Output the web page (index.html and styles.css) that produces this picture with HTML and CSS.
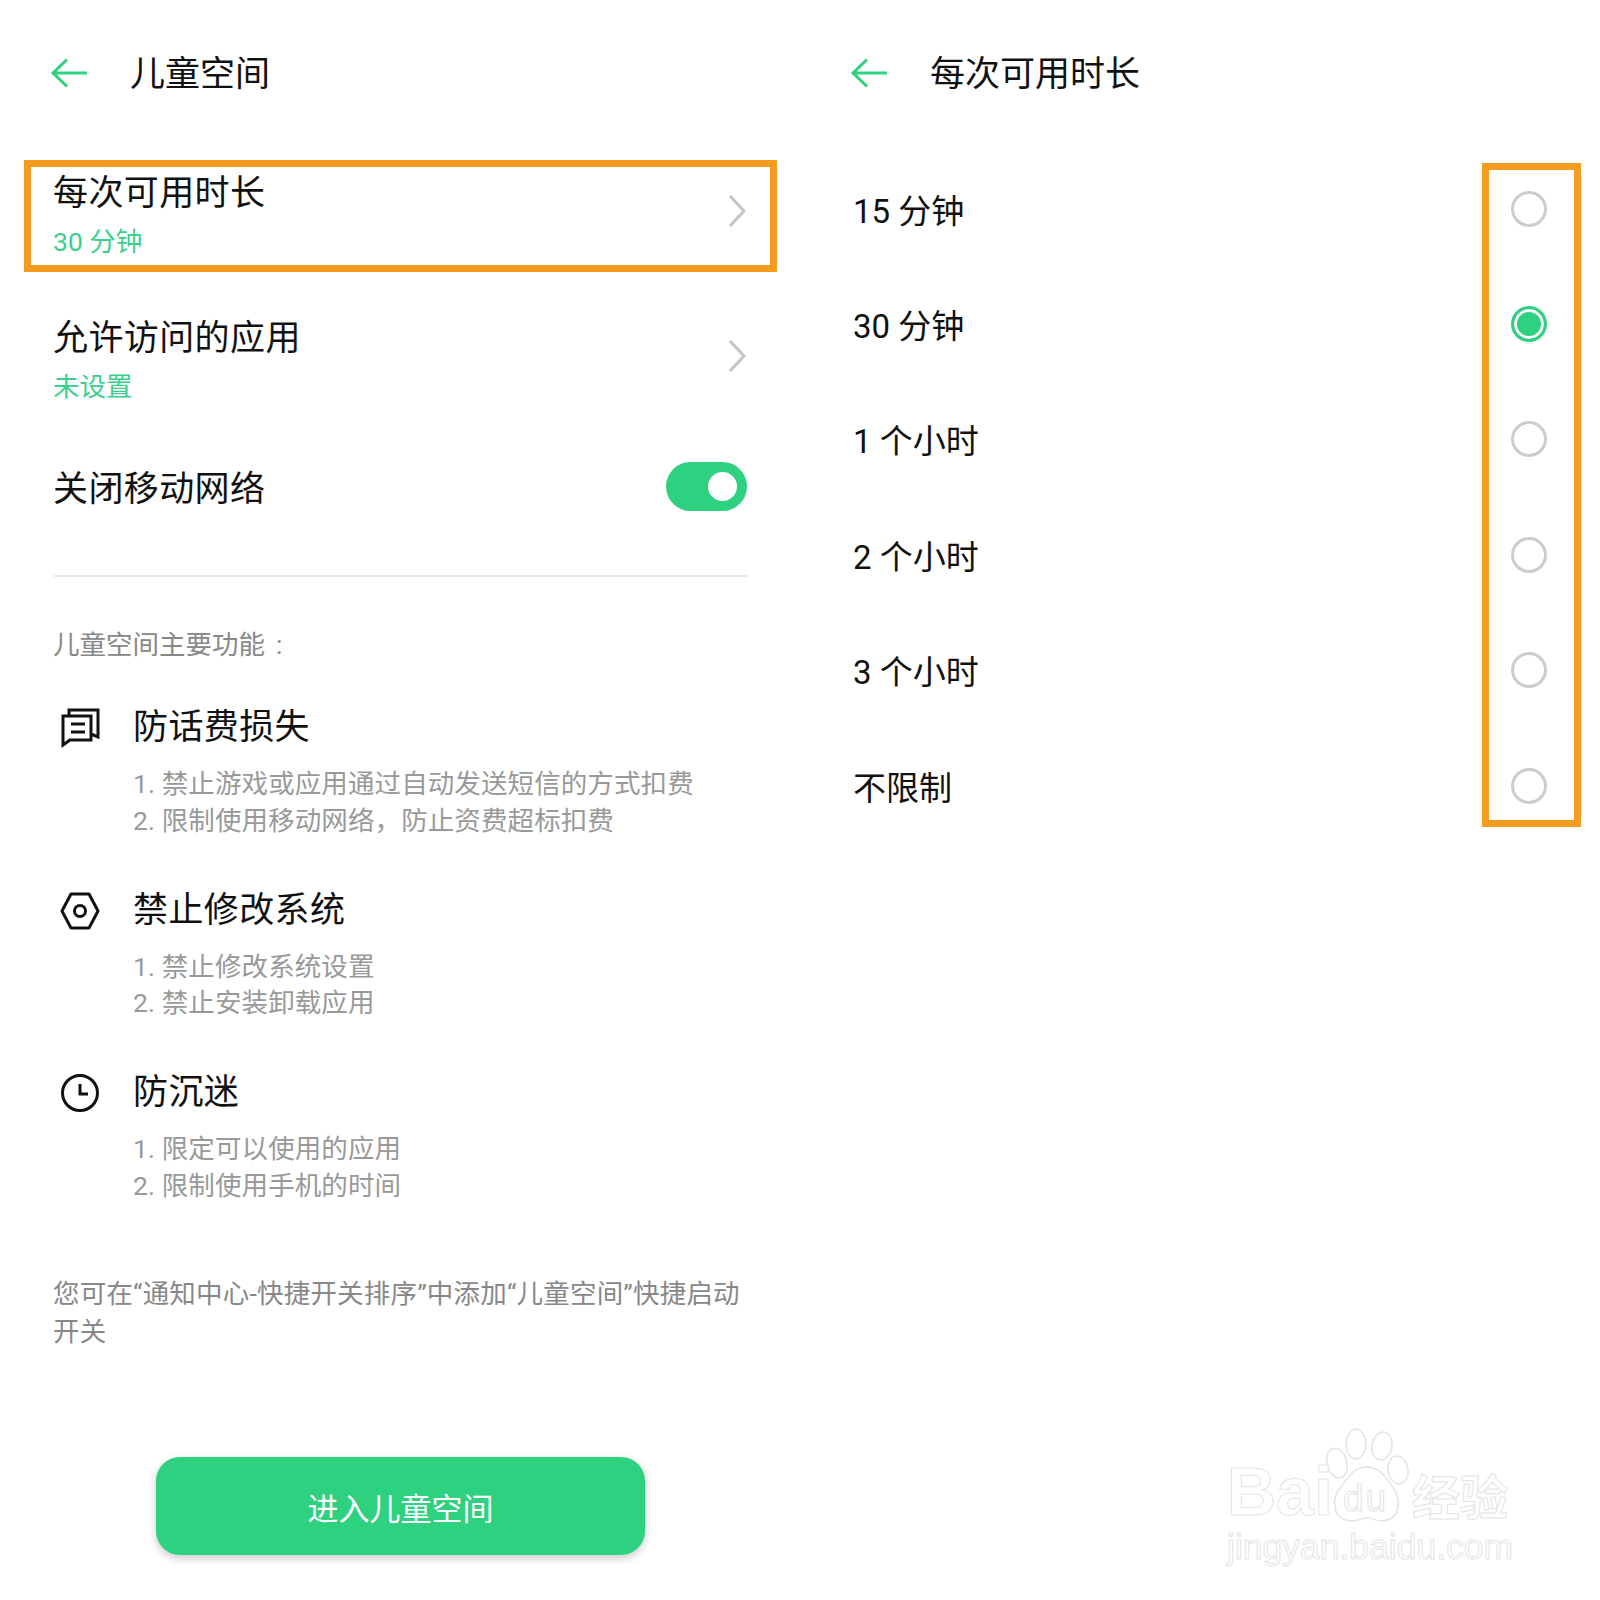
FILE: index.html
```html
<!DOCTYPE html>
<html lang="zh">
<head>
    <meta charset="utf-8">
    <title>儿童空间</title>
    <link rel="stylesheet" href="styles.css">
</head>
<body>
<div class="screens">
    <div class="panel panel-left">
        <div class="topbar">
            <svg class="back" width="38" height="30" viewBox="0 0 38 30"><path d="M17 1.5 3 15l14 13.5M3 15h34"/></svg>
            <div class="topbar-title">儿童空间</div>
        </div>

        <div class="item">
            <div class="item-text">
                <div class="item-title">每次可用时长</div>
                <div class="item-sub">30 分钟</div>
            </div>
            <svg class="chevron" width="20" height="34" viewBox="0 0 20 34"><path d="M3 2l14 15L3 32"/></svg>
        </div>
        <div class="item">
            <div class="item-text">
                <div class="item-title">允许访问的应用</div>
                <div class="item-sub">未设置</div>
            </div>
            <svg class="chevron" width="20" height="34" viewBox="0 0 20 34"><path d="M3 2l14 15L3 32"/></svg>
        </div>
        <div class="item item-switch">
            <div class="item-title">关闭移动网络</div>
            <div class="switch"><div class="knob"></div></div>
        </div>
        <div class="divider"></div>

        <div class="section-label">儿童空间主要功能<span class="colon">:</span></div>

        <div class="feature">
            <svg class="feature-icon" width="40" height="40" viewBox="0 0 40 40"><path d="M3 8h28v24H10l-7 5zM9 8V2h29v27l-7-3M11 16h14M11 24h14"/></svg>
            <div class="feature-title">防话费损失</div>
            <div class="feature-lines">1. 禁止游戏或应用通过自动发送短信的方式扣费<br>2. 限制使用移动网络，防止资费超标扣费</div>
        </div>
        <div class="feature">
            <svg class="feature-icon" width="40" height="40" viewBox="0 0 40 40"><path d="M11 3h18l9 17-9 17H11L2 20z" stroke-linejoin="round"/><circle cx="20" cy="20" r="5.5"/></svg>
            <div class="feature-title">禁止修改系统</div>
            <div class="feature-lines">1. 禁止修改系统设置<br>2. 禁止安装卸载应用</div>
        </div>
        <div class="feature">
            <svg class="feature-icon" width="40" height="40" viewBox="0 0 40 40"><circle cx="20" cy="20" r="17.5"/><path d="M20 11v10h8"/></svg>
            <div class="feature-title">防沉迷</div>
            <div class="feature-lines">1. 限定可以使用的应用<br>2. 限制使用手机的时间</div>
        </div>

        <div class="note">您可在“通知中心-快捷开关排序”中添加“儿童空间”快捷启动开关</div>

        <div class="enter-btn">进入儿童空间</div>
    </div>

    <div class="panel panel-right">
        <div class="topbar">
            <svg class="back" width="38" height="30" viewBox="0 0 38 30"><path d="M17 1.5 3 15l14 13.5M3 15h34"/></svg>
            <div class="topbar-title">每次可用时长</div>
        </div>
        <div class="options">
            <div class="option"><span>15 分钟</span><div class="radio"></div></div>
            <div class="option"><span>30 分钟</span><div class="radio checked"></div></div>
            <div class="option"><span>1 个小时</span><div class="radio"></div></div>
            <div class="option"><span>2 个小时</span><div class="radio"></div></div>
            <div class="option"><span>3 个小时</span><div class="radio"></div></div>
            <div class="option"><span>不限制</span><div class="radio"></div></div>
        </div>
    </div>
</div>

<!-- annotations drawn over the screenshots -->
<div class="mark mark-row"></div>
<div class="mark mark-radios"></div>

<div class="watermark">
    <svg class="paw" width="90" height="100" viewBox="0 0 90 100">
        <ellipse cx="15" cy="35" rx="10" ry="15" transform="rotate(-15 15 35)"/>
        <ellipse cx="34" cy="16" rx="10" ry="15"/>
        <ellipse cx="60" cy="18" rx="10" ry="14" transform="rotate(10 60 18)"/>
        <ellipse cx="76" cy="42" rx="10" ry="14" transform="rotate(-10 76 42)"/>
        <path d="M45 39c14 0 20 12 27 22 6 9 8 31-12 32-6 0-10-3-15-3s-9 3-15 3C10 92 9 72 18 60c8-10 13-21 27-21z"/>
    </svg>
    <div class="wm-bai">Bai</div>
    <div class="wm-du">du</div>
    <div class="wm-cn">经验</div>
    <div class="wm-url">jingyan.baidu.com</div>
</div>
</body>
</html>
```

FILE: styles.css
```css
* {
    box-sizing: border-box;
}
body {
    margin: 0;
    width: 1600px;
    height: 1600px;
    position: relative;
    overflow: hidden;
    background: #fff;
    color: #111;
    font-family: Roboto, "Noto Sans CJK SC", sans-serif;
}
.screens {
    display: flex;
}
.panel {
    width: 800px;
}
.topbar {
    height: 144px;
    display: flex;
    align-items: center;
    padding-left: 50px;
}
.back {
    fill: none;
    stroke: #2ed180;
    stroke-width: 3;
    margin: 2px 42px 0 0;
}
.topbar-title {
    padding-top: 6px;
    font-size: 35px;
    line-height: 44px;
}

.item {
    height: 145px;
    margin-top: -4px;
    margin-bottom: 4px;
    padding: 0 53px 0 53px;
    display: flex;
    align-items: center;
    justify-content: space-between;
}
.item-text {
    padding-top: 7px;
}
.item-title {
    font-size: 35px;
    line-height: 44px;
    letter-spacing: 0.4px;
}
.item-sub {
    margin-top: 8px;
    font-size: 26.5px;
    line-height: 36px;
    color: #3ccf8e;
}
.chevron {
    fill: none;
    stroke: #c4c4c4;
    stroke-width: 3;
    margin-bottom: 3px;
}
.item-switch {
    height: 112px;
}
.item-switch .item-title {
    padding-top: 8px;
}
.switch {
    width: 81px;
    height: 49px;
    border-radius: 25px;
    background: #2ed180;
    display: flex;
    align-items: center;
    justify-content: flex-end;
    padding-right: 10px;
}
.knob {
    width: 29px;
    height: 29px;
    border-radius: 50%;
    background: #fff;
}
.divider {
    height: 2px;
    margin: 33px 53px 0 54px;
    background: #e6e6e6;
}
.section-label {
    margin: 50px 0 0 53px;
    font-size: 26.5px;
    line-height: 36px;
    color: #888;
}
.colon {
    margin-left: 11px;
}

.feature {
    position: relative;
    margin-top: 43px;
    padding-left: 133px;
}
.feature + .feature {
    margin-top: 49.5px;
}
.feature-icon {
    position: absolute;
    left: 60px;
    top: 2px;
    fill: none;
    stroke: #111;
    stroke-width: 3;
}
.feature-title {
    font-size: 35px;
    line-height: 44px;
    letter-spacing: 0.4px;
}
.feature-lines {
    margin-top: 16px;
    font-size: 26.5px;
    line-height: 36.5px;
    letter-spacing: 0.1px;
    color: #999;
}
.note {
    margin: 71px 53px 0 53px;
    font-size: 26.5px;
    line-height: 38px;
    letter-spacing: 0.2px;
    color: #888;
}
.enter-btn {
    width: 489px;
    height: 98px;
    margin: 106px 0 0 156px;
    border-radius: 24px;
    background: #2ed180;
    box-shadow: 0 3px 8px rgba(0, 0, 0, 0.22);
    color: #fff;
    font-size: 31px;
    display: flex;
    align-items: center;
    justify-content: center;
}

.options {
    padding: 7px 54px 0 53px;
}
.option {
    height: 115.4px;
    display: flex;
    align-items: center;
    justify-content: space-between;
    font-size: 33px;
}
.radio {
    width: 36px;
    height: 36px;
    border-radius: 50%;
    border: 3px solid #ccc;
    margin-right: -1px;
}
.radio.checked {
    border-color: #2ed180;
    background: #2ed180;
    box-shadow: inset 0 0 0 3px #fff;
}

.mark {
    position: absolute;
    border: 7px solid #f39c1f;
}
.mark-row {
    left: 24px;
    top: 160px;
    width: 753px;
    height: 112px;
}
.mark-radios {
    left: 1482px;
    top: 163px;
    width: 99px;
    height: 664px;
}

.watermark {
    position: absolute;
    left: 1200px;
    top: 1400px;
    width: 340px;
    height: 180px;
    color: #fff;
    font-family: "Liberation Sans", sans-serif;
    font-weight: bold;
    -webkit-text-stroke: 1px #e4e4e4;
}
.paw {
    position: absolute;
    left: 122px;
    top: 28px;
    fill: #fff;
    stroke: #e4e4e4;
    stroke-width: 1.5;
}
.wm-bai {
    position: absolute;
    left: 27px;
    top: 58px;
    font-size: 68px;
    line-height: 66px;
}
.wm-du {
    position: absolute;
    left: 143px;
    top: 81px;
    font-size: 37px;
    line-height: 36px;
    letter-spacing: 2px;
    font-weight: normal;
}
.wm-cn {
    position: absolute;
    left: 212px;
    top: 66px;
    font-size: 48px;
    line-height: 56px;
    font-family: "Noto Sans CJK SC", sans-serif;
}
.wm-url {
    position: absolute;
    left: 27px;
    top: 127px;
    font-size: 35.5px;
    line-height: 40px;
    font-weight: normal;
}
```
